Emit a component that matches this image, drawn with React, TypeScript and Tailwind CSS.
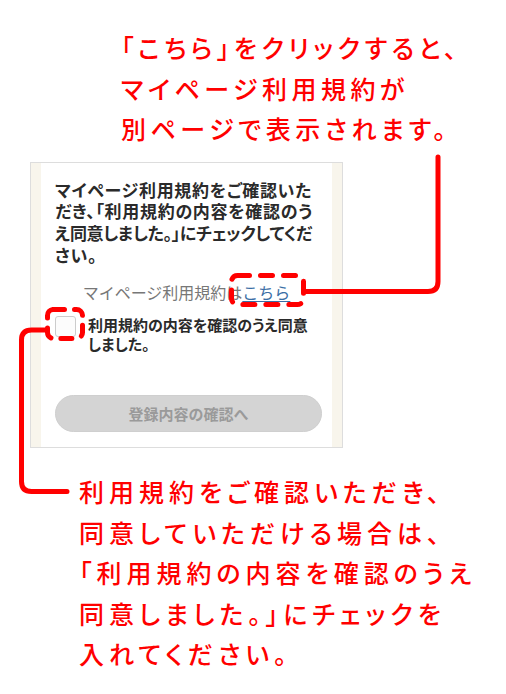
import React from 'react';

const RED = '#ff0000';

function Annotations() {
  return (
    <svg
      className="absolute inset-0 pointer-events-none"
      width={506}
      height={694}
      viewBox="0 0 506 694"
      fill="none"
    >
      {/* こちら link box + connector */}
      <rect
        x={231.5}
        y={275.5}
        width={72}
        height={29}
        rx={6}
        stroke={RED}
        strokeWidth={5}
        strokeDasharray="12 11"
        strokeLinecap="round"
      />
      <path
        d="M306 291.5 H428 Q438 291.5 438 281.5 V157"
        stroke={RED}
        strokeWidth={5}
        strokeLinecap="round"
        strokeLinejoin="round"
      />
      {/* checkbox box + connector */}
      <rect
        x={47.5}
        y={309.5}
        width={35}
        height={29}
        rx={6}
        stroke={RED}
        strokeWidth={5}
        strokeDasharray="11 10"
        strokeLinecap="round"
      />
      <path
        d="M45 330 H31.5 Q21.5 330 21.5 340 V481.5 Q21.5 491.5 31.5 491.5 H67"
        stroke={RED}
        strokeWidth={5}
        strokeLinecap="round"
        strokeLinejoin="round"
      />
    </svg>
  );
}

const headingLines = [
  { text: 'マイページ利用規約をご確認いた', track: 'tracking-[0.7px]' },
  { text: 'だき、「利用規約の内容を確認のう', track: 'tracking-[0.7px]' },
  { text: 'え同意しました。」にチェックしてくだ', track: 'tracking-[-0.3px]' },
  { text: 'さい。', track: 'tracking-[0.7px]' },
];

const topNote = ['「こちら」をクリックすると、', 'マイページ利用規約が', '別ページで表示されます。'];

const bottomNote = [
  '利用規約をご確認いただき、',
  '同意していただける場合は、',
  '「利用規約の内容を確認のうえ',
  '同意しました。」にチェックを',
  '入れてください。',
];

function TermsPanel() {
  return (
    <div className="ml-[30px] w-[313px] border border-[#dddddd] bg-[#f8f5ec] px-[10px]">
      <div className="bg-white px-[14px] pt-[16px] pb-[15px]">
        <div className="text-[17px] leading-[21.7px] font-bold text-[#2a2a2a] [font-feature-settings:'palt']">
          {headingLines.map(l => (
            <span key={l.text} className={`block whitespace-nowrap ${l.track}`}>
              {l.text}
            </span>
          ))}
        </div>
        <p className="mt-[16px] text-center text-[16px] leading-[22px] text-[#777777]">
          マイページ利用規約は<span className="text-[#3a6ea5] underline underline-offset-2">こちら</span>
        </p>
        <label className="mt-[13px] flex items-start gap-[12px]">
          <span className="h-[21px] w-[21px] shrink-0 rounded-[3px] border border-[#cccccc] bg-[#fcfcfc]" />
          <span className="text-[15px] leading-[18.5px] font-bold text-[#2a2a2a] [font-feature-settings:'palt']">
            利用規約の内容を確認のうえ同意しました。
          </span>
        </label>
        <div className="mx-auto mt-[42px] flex h-[37px] w-[267px] items-center justify-center rounded-full border border-[#cfcfcf] bg-[#d4d4d4] text-[15px] font-bold text-[#9a9a9a]">
          登録内容の確認へ
        </div>
      </div>
    </div>
  );
}

export default function App() {
  return (
    <div
      className="relative h-[694px] w-[506px] overflow-hidden bg-white"
      style={{ fontFamily: '"Noto Sans CJK JP", "Noto Sans", sans-serif' }}
    >
      <div className="pl-[121px] pt-[27px] text-[25px] leading-[40.5px] font-medium tracking-[4.5px] text-[#ff0000] [font-feature-settings:'palt']">
        {topNote.map(t => (
          <span key={t} className="block whitespace-nowrap">
            {t}
          </span>
        ))}
      </div>
      <div className="mt-[13px]">
        <TermsPanel />
      </div>
      <div className="mt-[23px] pl-[79px] text-[25px] leading-[40.5px] font-medium tracking-[5px] text-[#ff0000] [font-feature-settings:'palt']">
        {bottomNote.map(t => (
          <span key={t} className="block whitespace-nowrap">
            {t}
          </span>
        ))}
      </div>
      <Annotations />
    </div>
  );
}
